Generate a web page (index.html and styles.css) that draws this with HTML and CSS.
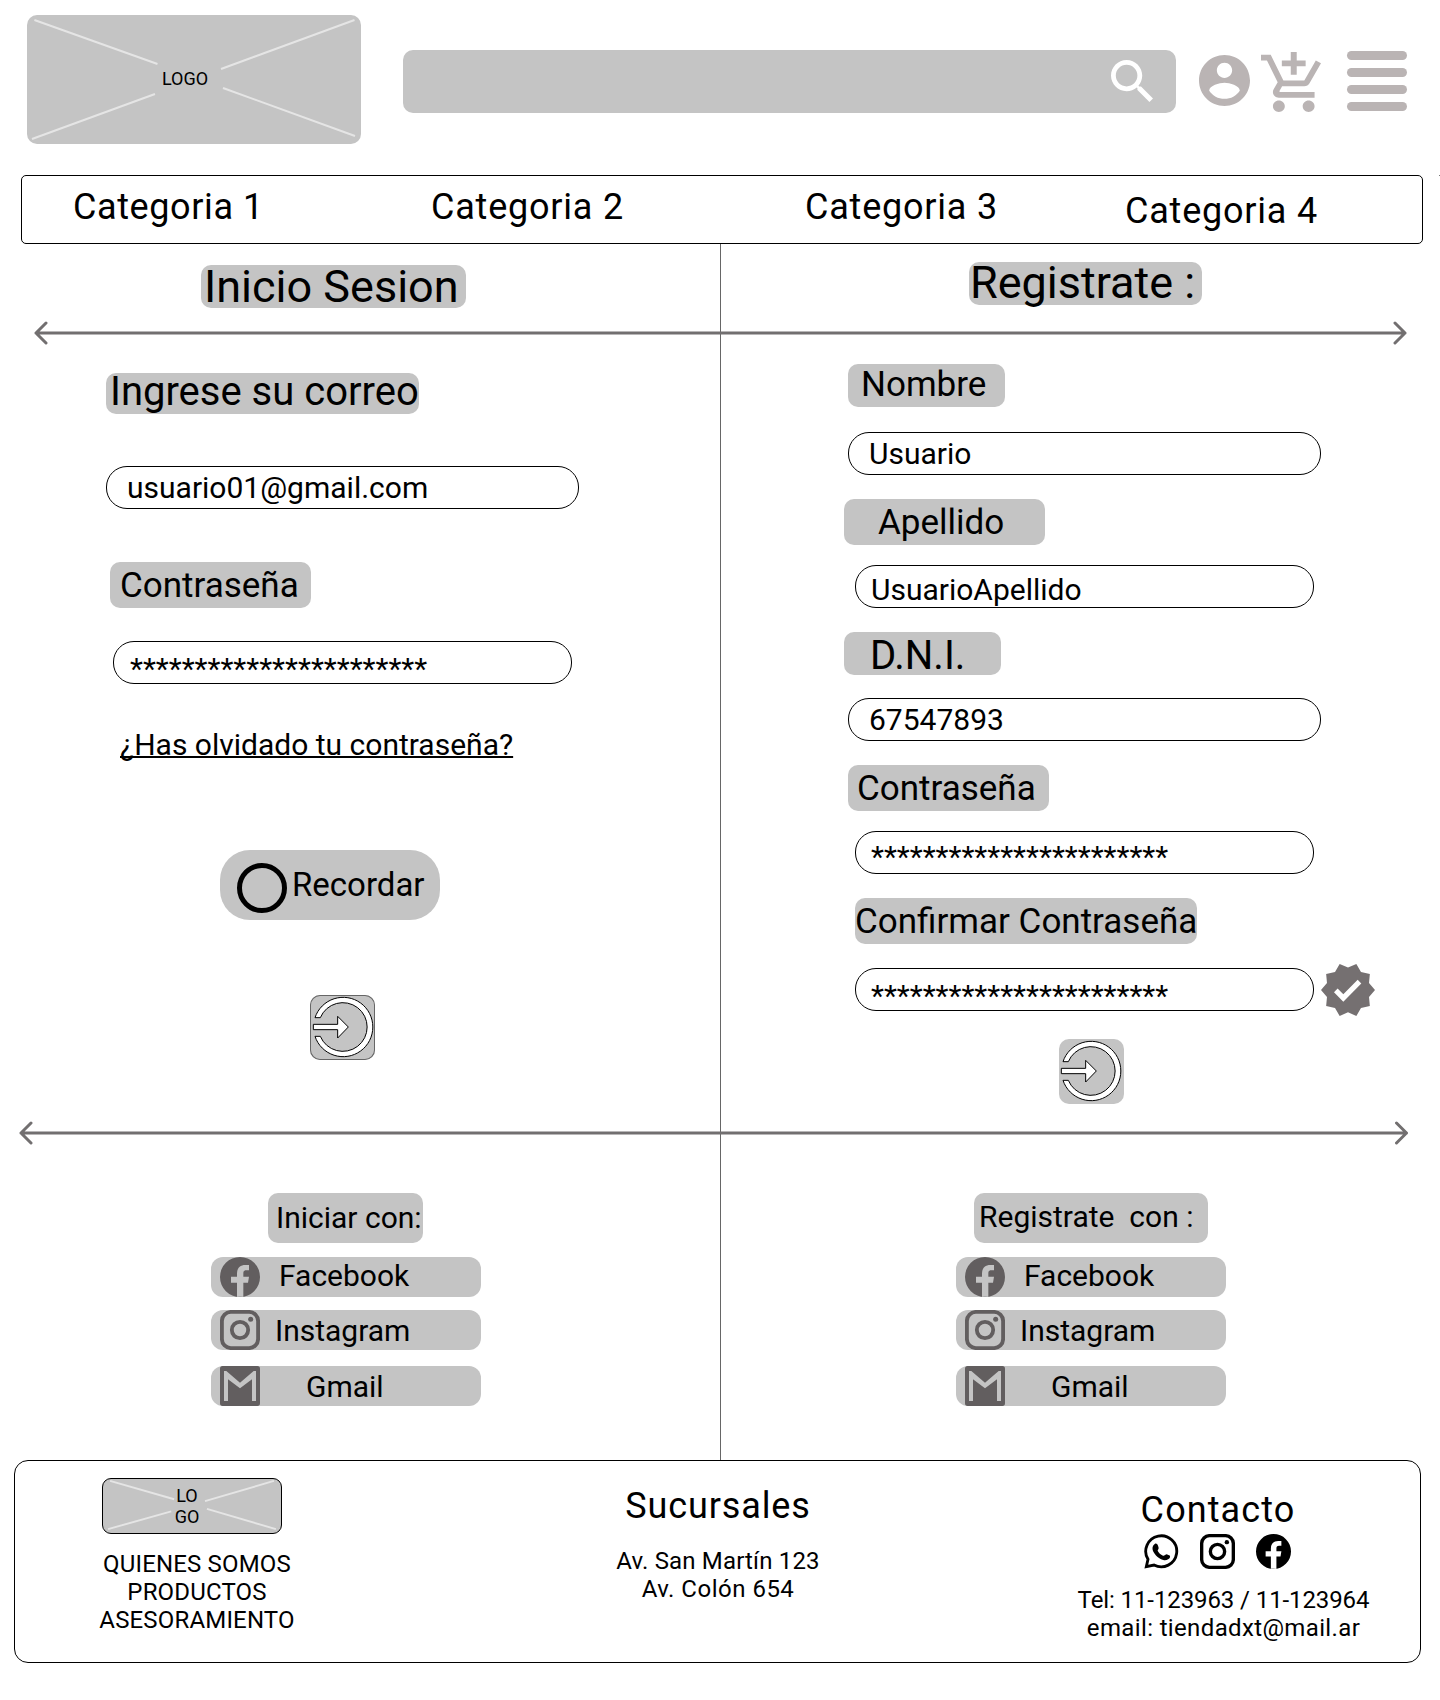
FILE: index.html
```html
<!DOCTYPE html>
<html lang="es">
<head>
<meta charset="utf-8">
<title>Inicio de sesion y registro</title>
<link rel="stylesheet" href="styles.css">
</head>
<body>
<svg class="defs" width="0" height="0">
  <symbol id="facebook" viewBox="0 0 120 120"><path fill-rule="evenodd" d="M60 0a60 60 0 1 0 0 120a60 60 0 1 0 0-120zM51 119.3V77H33V59H51V50C51 34 60 24 76 24H87V40H79C72 40 70 44 70 49V59H87L84 77H70V119.3z"/></symbol>
  <symbol id="instagram" viewBox="0 0 120 120"><g fill="none" stroke="currentColor" stroke-width="11.500"><rect x="5.700" y="5.700" width="108.600" height="108.600" rx="27"/><circle cx="60" cy="60" r="24.500"/></g><circle cx="92" cy="28" r="7.500"/></symbol>
  <symbol id="gmail" viewBox="0 0 120 120"><path fill-rule="evenodd" d="M8 0H112a8 8 0 0 1 8 8V112a8 8 0 0 1-8 8H8a8 8 0 0 1-8-8V8a8 8 0 0 1 8-8zM12 105V15H19L60 50L101 15H108V105H96V40L60 67L24 40V105z"/></symbol>
  <symbol id="enter" viewBox="0 0 195 195"><g fill="#fff" stroke="#000" stroke-width="3"><path d="M15 68A89 89 0 1 1 15 124H31A73 73 0 1 0 31 68z"/><path d="M10 88H83V64L115 96L83 129V104H10z"/></g></symbol>
</svg>

<header class="top">
  <div class="logo">
    <svg class="logo-lines" viewBox="0 0 334 129"><path d="M7.400 5L130.500 49M327.500 5L194 54M5 124L128 79M196 73L328 121"/></svg>
    <span>LOGO</span>
  </div>
  <div class="search">
    <svg width="42" height="42" viewBox="3 3 17.490 17.490"><path d="M15.500 14h-.79l-.28-.27C15.410 12.590 16 11.110 16 9.500 16 5.910 13.090 3 9.500 3S3 5.910 3 9.500 5.910 16 9.500 16c1.610 0 3.090-.59 4.230-1.570l.27.28v.79l5 4.990L20.490 19l-4.990-5zm-6 0C7.010 14 5 11.990 5 9.500S7.010 5 9.500 5 14 7.010 14 9.500 11.990 14 9.500 14z"/></svg>
  </div>
  <svg class="account" width="51" height="51" viewBox="2 2 20 20"><path d="M12 2C6.480 2 2 6.480 2 12s4.480 10 10 10 10-4.480 10-10S17.520 2 12 2zm0 3c1.660 0 3 1.340 3 3s-1.340 3-3 3-3-1.340-3-3 1.340-3 3-3zm0 14.200c-2.500 0-4.710-1.280-6-3.220.03-1.990 4-3.080 6-3.080 1.990 0 5.970 1.090 6 3.080-1.290 1.940-3.500 3.220-6 3.220z"/></svg>
  <svg class="cart" width="60" height="60" viewBox="1 1 20.160 21" preserveAspectRatio="none"><path d="M11 9h2V6h3V4h-3V1h-2v3H8v2h3v3zm-4 9c-1.100 0-1.990.9-1.990 2S5.900 22 7 22s2-.9 2-2-.9-2-2-2zm10 0c-1.100 0-1.990.9-1.990 2s.89 2 1.990 2 2-.9 2-2-.9-2-2-2zm-9.830-3.250l.03-.12.9-1.630h7.450c.75 0 1.410-.41 1.750-1.030l3.860-7.010L19.420 4h-.01l-1.100 2-2.760 5H8.530l-.13-.27L6.160 6l-.95-2-.94-2H1v2h2l3.600 7.590-1.350 2.450c-.16.28-.25.61-.25.96 0 1.100.9 2 2 2h12v-2H7.420c-.13 0-.25-.11-.25-.25z"/></svg>
  <div class="menu"><i></i><i></i><i></i><i></i></div>
</header>

<div class="nav-row">
  <nav class="nav">
    <a class="first">Categoria 1</a><a>Categoria 2</a><a>Categoria 3</a><a class="low">Categoria 4</a>
  </nav>
  <i class="tick"></i>
</div>

<section class="cols heads">
  <div><h1 class="pill title-in">Inicio Sesion</h1></div>
  <div><h1 class="pill title-up">Registrate :</h1></div>
</section>

<svg class="rule" width="1440" height="26" viewBox="0 0 1440 26"><path class="axis" d="M720.500 0V26"/><path d="M36 13H1405M46 3L36 13L46 23M1395 3L1405 13L1395 23"/></svg>

<section class="cols forms">
  <form>
    <div class="pill mail">Ingrese su correo</div>
    <div class="field wide f-mail">usuario01@gmail.com</div>
    <div class="pill pass">Contraseña</div>
    <div class="field f-pass stars">***********************</div>
    <a class="forgot">¿Has olvidado tu contraseña?</a>
    <div class="remember"><i></i><span>Recordar</span></div>
    <div class="enter bordered"><svg width="65" height="65"><use href="#enter"/></svg></div>
  </form>
  <form>
    <div class="pill name">Nombre</div>
    <div class="field wide f-name">Usuario</div>
    <div class="pill surname">Apellido</div>
    <div class="field f-surname">UsuarioApellido</div>
    <div class="pill dni">D.N.I.</div>
    <div class="field wide f-dni">67547893</div>
    <div class="pill pass2">Contraseña</div>
    <div class="field f-pass2 stars">***********************</div>
    <div class="pill confirm">Confirmar Contraseña</div>
    <div class="checked">
      <div class="field stars">***********************</div>
      <svg width="54" height="52" viewBox="1 1.500 22 21" preserveAspectRatio="none"><path d="M23 12l-2.440-2.790.34-3.690-3.610-.82-1.890-3.200L12 2.960 8.600 1.500 6.710 4.690 3.100 5.500l.34 3.700L1 12l2.440 2.790-.34 3.700 3.610.82L8.600 22.500l3.400-1.470 3.400 1.460 1.890-3.190 3.610-.82-.34-3.690L23 12zm-12.910 4.720l-3.800-3.810 1.480-1.480 2.320 2.330 5.850-5.870 1.480 1.480-7.330 7.350z"/></svg>
    </div>
    <div class="enter right"><svg width="65" height="65"><use href="#enter"/></svg></div>
  </form>
</section>

<svg class="rule" width="1440" height="26" viewBox="0 0 1440 26"><path class="axis" d="M720.500 0V26"/><path d="M21 13H1406.500M31 3L21 13L31 23M1396.500 3L1406.500 13L1396.500 23"/></svg>

<section class="cols socials">
  <div>
    <div class="pill with-in">Iniciar con:</div>
    <div class="social fb"><svg><use href="#facebook"/></svg><span>Facebook</span></div>
    <div class="social ig"><svg><use href="#instagram"/></svg><span>Instagram</span></div>
    <div class="social gm"><svg><use href="#gmail"/></svg><span>Gmail</span></div>
  </div>
  <div>
    <div class="pill with-up">Registrate&nbsp; con :</div>
    <div class="social fb"><svg><use href="#facebook"/></svg><span>Facebook</span></div>
    <div class="social ig"><svg><use href="#instagram"/></svg><span>Instagram</span></div>
    <div class="social gm"><svg><use href="#gmail"/></svg><span>Gmail</span></div>
  </div>
</section>

<footer class="foot">
  <div class="about">
    <div class="logo small">
      <svg class="logo-lines" viewBox="0 0 180 56"><path d="M5 2L71.500 21M175 2L103.500 23M3 52L68.500 33.500M105.500 31L177 52"/></svg>
      <span>LO<br>GO</span>
    </div>
    <p>QUIENES SOMOS<br>PRODUCTOS<br>ASESORAMIENTO</p>
  </div>
  <div class="stores">
    <h2>Sucursales</h2>
    <p><span class="street">Av. San Martín 123</span><br><span class="street-short">Av. Colón 654</span></p>
  </div>
  <div class="contact">
    <h2>Contacto</h2>
    <div class="nets">
      <svg viewBox="0 0 105 105"><path fill="none" stroke="currentColor" stroke-width="8.500" d="M7 98L12 76A46.500 46.500 0 1 1 30 93z"/><path d="M33 29c-8 5-9 14-6 22 6 13 18 24 31 27 9 2 18-2 20-8 1-5 0-6-12-9-4 4-6 5-9 4C50 62 44 56 41 50c0-3 3-4 3-8-2-10-5-14-11-13z"/></svg>
      <svg><use href="#instagram"/></svg>
      <svg><use href="#facebook"/></svg>
    </div>
    <p><span class="phone">Tel: 11-123963 / 11-123964</span><br><span class="email">email: tiendadxt@mail.ar</span></p>
  </div>
</footer>
</body>
</html>
```
FILE: styles.css
```css
* { box-sizing: border-box; }
body { margin: 0; width: 1440px; background: #fff; color: #000; font-family: Roboto, "Liberation Sans", sans-serif; }
h1, h2, p { margin: 0; font-weight: 400; }
svg { display: block; fill: currentColor; flex: none; }
.defs { position: absolute; }

.top { display: flex; align-items: flex-start; height: 175px; padding: 15px 0 0 27px; color: #bab4b4; }
.logo { display: grid; place-items: center; width: 334px; height: 129px; border-radius: 10px; background: #c4c4c4; color: #000; font-size: 18px; line-height: 21px; text-align: center; }
.logo > * { grid-area: 1 / 1; }
.logo > span { padding: 0 18px 2px 0; }
.logo-lines { width: 100%; height: 100%; fill: none; stroke: #e5e5e5; stroke-width: 2; }
.search { display: flex; justify-content: flex-end; width: 773px; height: 63px; margin: 35px 0 0 42px; padding: 10px 23px 0 0; border-radius: 10px; background: #c4c4c4; color: #fff; }
.account { margin: 40px 0 0 23px; }
.cart { margin: 37px 0 0 11px; }
.menu { display: grid; gap: 8px; width: 60px; margin: 36px 0 0 26px; }
.menu i { height: 9px; border-radius: 5px; background: #bab4b4; }

.nav-row { display: flex; justify-content: space-between; padding-left: 21px; }
.nav { display: grid; grid-template-columns: 358px 374px 320px 1fr; width: 1402px; height: 69px; padding-left: 51px; border: 1px solid #000; border-radius: 5px; font-size: 36px; line-height: 62px; letter-spacing: .78px; white-space: nowrap; }
.nav .first { letter-spacing: .6px; }
.nav .low { padding-top: 4px; }
.tick { width: 1px; height: 1px; background: #777; }

.cols { display: grid; grid-template-columns: 720px 720px; }
.cols > :last-child { border-left: 1px solid #666; }
.cols > * { display: flex; flex-direction: column; align-items: flex-start; }
.pill { border-radius: 10px; background: #c4c4c4; white-space: nowrap; }
.heads { height: 76px; }
.title-in { width: 265px; height: 43px; margin: 21px 0 0 201px; padding-left: 3px; font-size: 45px; line-height: 43px; }
.title-up { width: 233px; height: 43px; margin: 18px 0 0 248px; padding-left: 1px; font-size: 45px; line-height: 41px; }
.rule { fill: none; stroke: #726f70; stroke-width: 3; stroke-linecap: round; stroke-linejoin: round; }
.rule .axis { stroke: #666; stroke-width: 1; stroke-linecap: butt; }

.forms { height: 774px; }
.field { width: 459px; height: 43px; padding-left: 15px; border: 1px solid #000; border-radius: 21px; font-size: 30px; line-height: 41px; }
.field.wide { width: 473px; padding-left: 20px; }
.mail { width: 313px; height: 41px; margin: 27px 0 0 106px; padding-left: 4px; font-size: 40px; line-height: 37px; }
.f-mail { margin: 52px 0 0 106px; }
.pass { width: 201px; height: 46px; margin: 53px 0 0 110px; padding-left: 10px; font-size: 35px; line-height: 48px; }
.f-pass { margin: 33px 0 0 113px; padding-left: 16px; }
.stars { line-height: 53px; }
.forgot { margin: 43px 0 0 120px; font-size: 30px; line-height: 36px; text-decoration: underline; text-decoration-thickness: 1.500px; text-decoration-skip-ink: none; }
.remember { display: flex; width: 220px; height: 70px; margin: 87px 0 0 220px; padding: 13px 0 0 17px; border-radius: 30px; background: #c4c4c4; font-size: 33px; line-height: 44px; }
.remember i { width: 50px; height: 50px; margin-right: 5px; border: 5px solid #000; border-radius: 50%; }
.enter { width: 65px; height: 65px; border-radius: 10px; background: #c4c4c4; }
.bordered { margin: 75px 0 0 310px; box-shadow: inset 0 0 0 1px #666; }

.name { width: 157px; height: 43px; margin: 18px 0 0 127px; padding-left: 13px; font-size: 35px; line-height: 42px; }
.f-name { margin: 25px 0 0 127px; }
.surname { width: 201px; height: 46px; margin: 24px 0 0 123px; padding-left: 34px; font-size: 35px; line-height: 48px; }
.f-surname { margin: 20px 0 0 134px; line-height: 48px; }
.dni { width: 157px; height: 43px; margin: 24px 0 0 123px; padding-left: 26px; font-size: 40px; line-height: 48px; }
.f-dni { margin: 23px 0 0 127px; }
.pass2 { width: 201px; height: 46px; margin: 24px 0 0 127px; padding-left: 9px; font-size: 35px; line-height: 48px; }
.f-pass2 { margin: 20px 0 0 134px; }
.f-pass2.stars { line-height: 50px; }
.confirm { width: 342px; height: 46px; margin: 24px 0 0 134px; font-size: 35px; line-height: 48px; }
.checked { display: flex; gap: 6.500px; margin: 20px 0 0 134px; color: #757071; }
.checked .field { margin-top: 4px; color: #000; }
.right { margin: 23px 0 0 338px; }
.right svg { margin-left: -1px; }

.socials { height: 314px; font-size: 30px; }
.with-in { width: 155px; height: 50px; margin: 47px 0 14px 268px; padding-left: 8px; line-height: 50px; }
.with-up { width: 234px; height: 50px; margin: 47px 0 14px 253px; padding-left: 5px; line-height: 48px; }
.social { display: flex; width: 270px; height: 40px; margin-left: 211px; padding-left: 9px; border-radius: 12px; background: #c4c4c4; }
.cols > :last-child .social { margin-left: 235px; }
.social svg { width: 40px; height: 40px; color: #625e5f; }
.fb { line-height: 38px; }
.fb span { margin-left: 19px; }
.ig { margin-top: 13px; line-height: 42px; }
.ig span { margin-left: 15px; }
.gm { margin-top: 16px; line-height: 42px; }
.gm span { margin-left: 46px; }

.foot { display: grid; grid-template-columns: 366px 674px 1fr; width: 1407px; height: 203px; margin-left: 14px; border: 1px solid #000; border-radius: 14px; font-size: 24px; line-height: 28px; text-align: center; white-space: nowrap; }
.foot h2 { font-size: 36px; line-height: 43px; }
.small { width: 180px; height: 56px; margin: 17px 0 0 87px; border: 1px solid #000; border-radius: 9px; }
.small > span { padding: 0 10px 0 0; }
.about p { margin-top: 16px; padding-right: 2px; letter-spacing: .17px; }
.stores h2 { margin-top: 24px; letter-spacing: .9px; }
.stores p { margin-top: 19px; }
.street { letter-spacing: .17px; }
.street-short { letter-spacing: .5px; }
.contact { padding-right: 39px; }
.contact h2 { margin-top: 28px; letter-spacing: 1.100px; }
.nets { display: flex; justify-content: center; gap: 21px; margin-top: 2px; padding-right: 2px; }
.nets svg { width: 35px; height: 35px; }
.contact p { margin: 17px 0 0 11px; }
.phone { letter-spacing: -.1px; }
.email { letter-spacing: .36px; }
```
